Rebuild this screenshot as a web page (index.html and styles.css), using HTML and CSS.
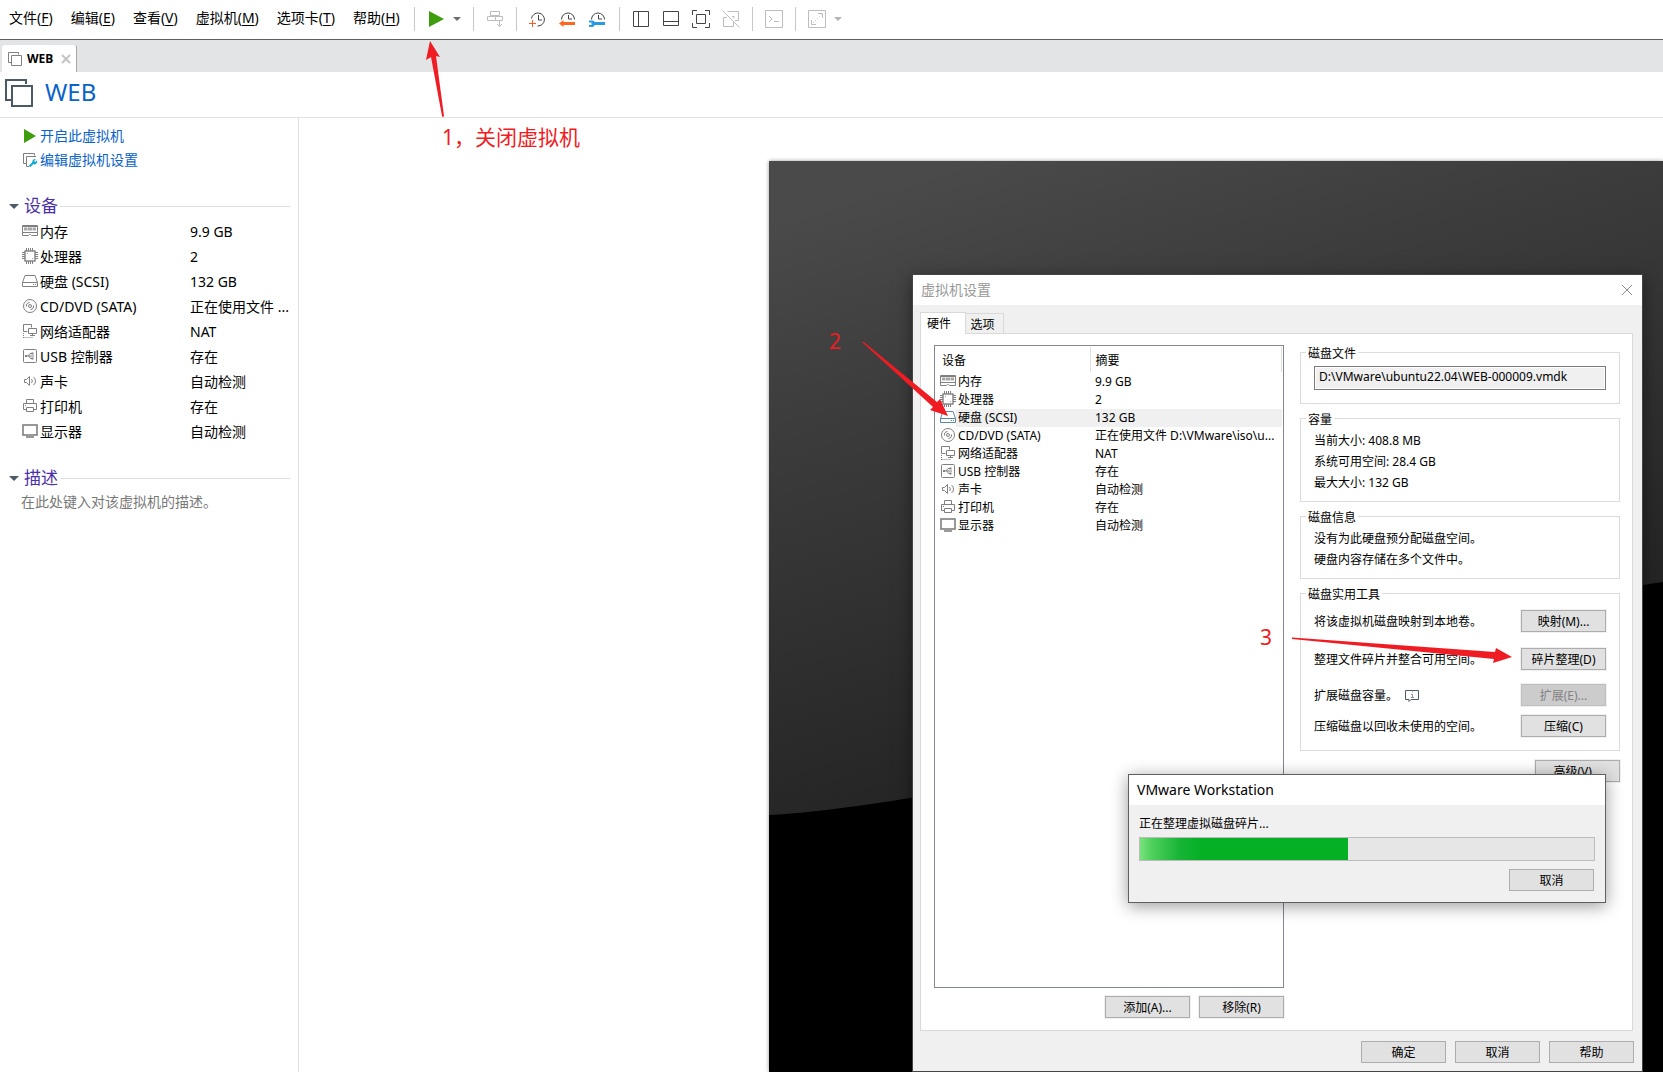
FILE: index.html
```html
<!DOCTYPE html>
<html lang="zh-CN">
<head>
<meta charset="utf-8">
<title>WEB - VMware Workstation</title>
<link rel="stylesheet" href="styles.css">
</head>
<body>
<svg class="symbols" aria-hidden="true">
  <symbol id="i-vm" viewBox="0 0 14 14"><path d="M3.500 10.500H.5V.5h10v2M3.500 3.500h10v10h-10z"/></symbol>
  <symbol id="i-memory" viewBox="0 0 16 16"><path d="M.5 2.500h15v10H9.500l-1-1h-1l-1 1H.5zM.5 9.500h15M1 3.500h14"/><path d="M2 4.500h3.500v3H2zM6 4.500h4v3H6zM10.500 4.500H14v3h-3.500z" fill="currentColor" stroke="none" opacity=".7"/></symbol>
  <symbol id="i-cpu" viewBox="0 0 16 16"><rect x="3" y="3" width="10" height="10" stroke-width="1.400"/><path d="M4.500 0v3M6.500 0v3M8.500 0v3M10.500 0v3M4.500 13v3M6.500 13v3M8.500 13v3M10.500 13v3M0 4.500h3M0 6.500h3M0 8.500h3M0 10.500h3M13 4.500h3M13 6.500h3M13 8.500h3M13 10.500h3M5.500 6V5.500H6M10 10.500h.5V10"/></symbol>
  <symbol id="i-disk" viewBox="0 0 16 16"><path d="M.5 9.500l2.500-7h10l2.500 7v4H.5zM.5 9.500h15M11 11.500h1M13 11.500h1"/></symbol>
  <symbol id="i-cd" viewBox="0 0 16 16"><circle cx="8" cy="8" r="6.500"/><circle cx="8" cy="8" r="1.500"/><path d="M4.500 8.500a3.500 3.500 0 0 1 3-4M11.500 7.500a3.500 3.500 0 0 1-3 4"/></symbol>
  <symbol id="i-net" viewBox="0 0 16 16"><path d="M5.500 8.500h-4v-7h8v3M6.500 5.500h8v5h-8zM10.500 10.500v2M8 12.500h5"/><path d="M1.500 10v5M1.500 14.500h9" stroke-dasharray="1 1"/></symbol>
  <symbol id="i-usb" viewBox="0 0 16 16"><rect x="1.500" y="1.500" width="13" height="13" rx="1"/><path d="M4 8h8M6 8l2-2.500h2M7 8l1.500 2.500H10"/><path d="M3 7h2v2H3zM9.500 4.500h2v2h-2zM9.500 9.500h2v2h-2z" fill="currentColor" stroke="none"/></symbol>
  <symbol id="i-sound" viewBox="0 0 16 16"><path d="M2.500 6.500h2l3-3v9l-3-3h-2zM9.500 6a3 3 0 0 1 0 4M11.500 4a5 5 0 0 1 0 8"/></symbol>
  <symbol id="i-print" viewBox="0 0 16 16"><path d="M4.500 5.500v-4h7v4M4.500 11.500h-3v-6h13v6h-3M4.500 9.500h7v4h-7zM3 7.500h1"/></symbol>
  <symbol id="i-display" viewBox="0 0 16 16"><rect x="1" y="2" width="14" height="10" stroke-width="1.600"/><path d="M4 14h8" stroke-width="1.600"/></symbol>
  <symbol id="i-wrench" viewBox="0 0 16 16"><path d="M4.500 11.500h-3v-10h11v2M7 14.500H4.500v-10H14"/><path d="M7.500 14.500l4-4" class="cyan"/><path d="M15 8.500l-2 1.500-.8-.8L13.700 7a3 3 0 0 0-3.200 4L12 12.500a3 3 0 0 0 3-4z" class="cyanfill"/></symbol>
</svg>

<header class="menubar">
  <nav class="menus" aria-label="主菜单">
    <button>文件(<u>F</u>)</button>
    <button>编辑(<u>E</u>)</button>
    <button>查看(<u>V</u>)</button>
    <button>虚拟机(<u>M</u>)</button>
    <button>选项卡(<u>T</u>)</button>
    <button>帮助(<u>H</u>)</button>
  </nav>
  <div class="tools">
    <div class="group power">
      <button aria-label="开启"><svg width="18" height="18"><path d="M1 1v16l15-8z" fill="#3f9c0f"/></svg></button>
      <button aria-label="电源选项"><svg width="10" height="18"><path d="M1 7h8L5 11z" fill="#6e6e6e"/></svg></button>
    </div>
    <div class="group send">
      <button disabled aria-label="发送"><svg width="18" height="18" class="line"><path d="M4.500 1.500h9v4h-9zM1.500 6.500h8v4h-8zM9.500 6.500h7v4h-7M13.500 11v5M11 14l2.500 2.500L16 14"/></svg></button>
    </div>
    <div class="group snaps">
      <button aria-label="拍摄快照"><svg width="18" height="18" class="line"><path d="M3.500 8.500a6.500 6.500 0 1 1 6 7.500M10.500 5v5H14"/><path d="M1 13.500h7M4.500 10v7" stroke="#ff5a1f"/></svg></button>
      <button aria-label="恢复快照"><svg width="18" height="18" class="line"><path d="M3.500 9.500a6.500 6.500 0 1 1 13 0M10.500 5v4H14"/><path d="M1 13.500L5.500 10v2H17v3H5.500v2z" fill="#ff661f" stroke="none"/></svg></button>
      <button aria-label="快照管理器"><svg width="18" height="18" class="line"><path d="M3.500 9.500a6.500 6.500 0 1 1 13 0M10.500 5v4H14"/><path d="M1 10.500h4L7 12h10v3H7l-2 2H1v-2h2.500v-2.500H1z" fill="#2a9be0" stroke="none"/></svg></button>
    </div>
    <div class="group views">
      <button aria-label="显示库"><svg width="18" height="18" class="line"><path d="M1.500 1.500h15v15h-15zM6.500 1.500v15"/></svg></button>
      <button aria-label="显示缩略图"><svg width="18" height="18" class="line"><path d="M1.500 1.500h15v14h-15zM1.500 11.500h15"/></svg></button>
      <button aria-label="全屏"><svg width="18" height="18" class="line"><path d="M.5 5V.5H5M13 .5h4.500V5M17.500 13v4.500H13M5 17.500H.5V13M4.500 4.500h9v9h-9z"/></svg></button>
      <button disabled aria-label="Unity"><svg width="18" height="18" class="line"><path d="M5.500 1.500h11v9H13M11.500 12v4.500h-10v-9H5M10 6.500h2v2M.5 .5l17 17"/></svg></button>
    </div>
    <div class="group console">
      <button disabled aria-label="控制台"><svg width="18" height="18" class="line"><path d="M.5 .5h17v17H.5zM4 6l3 3-3 3M9 11.500h5"/></svg></button>
    </div>
    <div class="group stretch">
      <button disabled aria-label="拉伸"><svg width="18" height="18" class="line"><path d="M.5 .5h17v17H.5zM10 3.500h4.500V8M3.500 10v4.500H8"/><path d="M5 13l9-9" stroke-dasharray="1 2"/></svg></button>
      <button disabled aria-label="拉伸选项"><svg width="10" height="18"><path d="M1 7h8L5 11z" fill="#b5b5b5"/></svg></button>
    </div>
  </div>
</header>

<div class="tabstrip">
  <div class="vmtab">
    <svg class="line gray" width="14" height="14"><use href="#i-vm"/></svg>
    <span>WEB</span>
    <button aria-label="关闭"><svg width="10" height="10"><path d="M1 1l8 8M9 1l-8 8" stroke="#c4c4c4" stroke-width="2"/></svg></button>
  </div>
</div>

<div class="vmtitle">
  <svg class="line slate" width="28" height="28"><use href="#i-vm"/></svg>
  <h1>WEB</h1>
</div>

<main class="content">
  <aside class="sidebar">
    <div class="actions">
      <a href="#"><svg width="16" height="16"><path d="M2 1v14l12-7z" fill="#3f9c0f"/></svg>开启此虚拟机</a>
      <a href="#"><svg class="line gray" width="16" height="16"><use href="#i-wrench"/></svg>编辑虚拟机设置</a>
    </div>
    <section>
      <h2>设备</h2>
      <table class="devices">
        <tr><th scope="row"><svg class="line gray" width="16" height="16"><use href="#i-memory"/></svg>内存</th><td>9.9 GB</td></tr>
        <tr><th scope="row"><svg class="line gray" width="16" height="16"><use href="#i-cpu"/></svg>处理器</th><td>2</td></tr>
        <tr><th scope="row"><svg class="line gray" width="16" height="16"><use href="#i-disk"/></svg>硬盘 (SCSI)</th><td>132 GB</td></tr>
        <tr><th scope="row"><svg class="line gray" width="16" height="16"><use href="#i-cd"/></svg>CD/DVD (SATA)</th><td>正在使用文件 ...</td></tr>
        <tr><th scope="row"><svg class="line gray" width="16" height="16"><use href="#i-net"/></svg>网络适配器</th><td>NAT</td></tr>
        <tr><th scope="row"><svg class="line gray" width="16" height="16"><use href="#i-usb"/></svg>USB 控制器</th><td>存在</td></tr>
        <tr><th scope="row"><svg class="line gray" width="16" height="16"><use href="#i-sound"/></svg>声卡</th><td>自动检测</td></tr>
        <tr><th scope="row"><svg class="line gray" width="16" height="16"><use href="#i-print"/></svg>打印机</th><td>存在</td></tr>
        <tr><th scope="row"><svg class="line gray" width="16" height="16"><use href="#i-display"/></svg>显示器</th><td>自动检测</td></tr>
      </table>
    </section>
    <section class="description">
      <h2>描述</h2>
      <p>在此处键入对该虚拟机的描述。</p>
    </section>
  </aside>

  <div class="stage">
    <div class="preview">
      <svg class="wallpaper" viewBox="0 0 894 911" preserveAspectRatio="none" aria-hidden="true">
        <defs><linearGradient id="wall" gradientUnits="userSpaceOnUse" x1="200" y1="0" x2="400" y2="650"><stop offset="0" stop-color="#4a4a4a"/><stop offset=".3" stop-color="#3c3c3c"/><stop offset="1" stop-color="#202020"/></linearGradient></defs>
        <rect width="894" height="911" fill="#000"/>
        <path d="M0 0H894V421C780 436 600 520 480 560S100 650 0 654z" fill="url(#wall)"/>
      </svg>

      <section class="settings" role="dialog" aria-labelledby="settings-title">
        <header class="titlebar">
          <h2 id="settings-title">虚拟机设置</h2>
          <button aria-label="关闭"><svg width="12" height="12"><path d="M1 1l10 10M11 1L1 11" stroke="#8c8c8c"/></svg></button>
        </header>
        <div class="tabs" role="tablist">
          <button role="tab" aria-selected="true">硬件</button>
          <button role="tab" aria-selected="false">选项</button>
        </div>
        <div class="pane">
          <div class="hardware">
            <div class="listbox">
              <table>
                <thead><tr><th>设备</th><th>摘要</th></tr></thead>
                <tbody>
                  <tr><td><svg class="line gray" width="16" height="16"><use href="#i-memory"/></svg>内存</td><td>9.9 GB</td></tr>
                  <tr><td><svg class="line gray" width="16" height="16"><use href="#i-cpu"/></svg>处理器</td><td>2</td></tr>
                  <tr class="selected"><td><svg class="line blue" width="16" height="16"><use href="#i-disk"/></svg>硬盘 (SCSI)</td><td>132 GB</td></tr>
                  <tr><td><svg class="line gray" width="16" height="16"><use href="#i-cd"/></svg>CD/DVD (SATA)</td><td>正在使用文件 D:\VMware\iso\u...</td></tr>
                  <tr><td><svg class="line gray" width="16" height="16"><use href="#i-net"/></svg>网络适配器</td><td>NAT</td></tr>
                  <tr><td><svg class="line gray" width="16" height="16"><use href="#i-usb"/></svg>USB 控制器</td><td>存在</td></tr>
                  <tr><td><svg class="line gray" width="16" height="16"><use href="#i-sound"/></svg>声卡</td><td>自动检测</td></tr>
                  <tr><td><svg class="line gray" width="16" height="16"><use href="#i-print"/></svg>打印机</td><td>存在</td></tr>
                  <tr><td><svg class="line gray" width="16" height="16"><use href="#i-display"/></svg>显示器</td><td>自动检测</td></tr>
                </tbody>
              </table>
            </div>
            <div class="buttons">
              <button class="btn">添加(A)...</button>
              <button class="btn">移除(R)</button>
            </div>
          </div>
          <div class="details">
            <fieldset class="file">
              <legend id="disk-file">磁盘文件</legend>
              <div><input type="text" readonly aria-labelledby="disk-file" value="D:\VMware\ubuntu22.04\WEB-000009.vmdk"></div>
            </fieldset>
            <fieldset>
              <legend>容量</legend>
              <div class="lines">
                <p>当前大小: 408.8 MB</p>
                <p>系统可用空间: 28.4 GB</p>
                <p>最大大小: 132 GB</p>
              </div>
            </fieldset>
            <fieldset>
              <legend>磁盘信息</legend>
              <div class="lines">
                <p>没有为此硬盘预分配磁盘空间。</p>
                <p>硬盘内容存储在多个文件中。</p>
              </div>
            </fieldset>
            <fieldset>
              <legend>磁盘实用工具</legend>
              <div class="utilities">
                <p>将该虚拟机磁盘映射到本地卷。</p><button class="btn">映射(M)...</button>
                <p>整理文件碎片并整合可用空间。</p><button class="btn">碎片整理(D)</button>
                <p>扩展磁盘容量。<svg class="line slate" width="16" height="14"><path d="M1.500 1.500h13v9H7l-2 2v-2H1.500z"/><path d="M8 3h1M7 5.500h1.500V9M7 8.500h3" stroke="#8a949c"/></svg></p><button class="btn" disabled>扩展(E)...</button>
                <p>压缩磁盘以回收未使用的空间。</p><button class="btn">压缩(C)</button>
              </div>
            </fieldset>
            <button class="btn advanced">高级(V)...</button>
          </div>
        </div>
        <footer class="buttons">
          <button class="btn">确定</button>
          <button class="btn">取消</button>
          <button class="btn">帮助</button>
        </footer>
      </section>

      <section class="progress" role="dialog" aria-labelledby="progress-title">
        <h2 id="progress-title">VMware Workstation</h2>
        <div class="progress-body">
          <label for="defrag">正在整理虚拟磁盘碎片...</label>
          <progress id="defrag" max="1000" value="458"></progress>
          <button class="btn">取消</button>
        </div>
      </section>
    </div>
  </div>
</main>

<div class="notes">
  <svg aria-hidden="true"><path d="M430 41L440 57L436 56L444 116Q443 118 442 116L431 57L426 60zM862 342Q863 341 865 343L937 402L940 399L948 416L930 410L933 407zM1292 637.500L1495 652L1496 648L1512 657L1493 663L1494 659L1292 639z" fill="#f01c24"/></svg>
  <span class="note one">1，关闭虚拟机</span>
  <span class="note two">2</span>
  <span class="note three">3</span>
</div>
</body>
</html>
```
FILE: styles.css
```css
* { box-sizing: border-box; }

body {
  margin: 0;
  min-height: 100vh;
  display: flex;
  flex-direction: column;
  position: relative;
  overflow-x: hidden;
  background: #fff;
  color: #000;
  font: 14px/20px "Noto Sans", "Noto Sans CJK SC", sans-serif;
}

h1, h2, p { margin: 0; font-weight: 400; }
button { font: inherit; color: inherit; margin: 0; padding: 0; border: 0; background: none; }
svg { display: block; flex: none; }
u { text-underline-offset: 2px; }

.symbols { position: absolute; width: 0; height: 0; }
.line { fill: none; stroke: currentColor; color: #444; }
.line.gray { color: #808080; }
.line.slate { color: #4a5a66; }
.line.blue { color: #5b86ac; }
.cyan { stroke: #16a9cf; stroke-width: 2; }
.cyanfill { fill: #16a9cf; stroke: none; }

/* menu and toolbar */
.menubar {
  display: flex;
  align-items: center;
  height: 40px;
  padding: 0 0 3px 9px;
  border-bottom: 1px solid #5f615f;
}
.menus { display: flex; gap: 18px; width: 405px; white-space: nowrap; }
.tools { display: flex; height: 24px; margin-top: 2px; }
.group { display: flex; align-items: center; border-left: 1px solid #c8c8c8; }
.group button:disabled .line { color: #bdbdbd; }
.power { width: 59px; padding-left: 13px; gap: 6px; }
.send { width: 43px; padding-left: 12px; }
.snaps { width: 103px; padding-left: 11px; gap: 12px; }
.views { width: 133px; padding-left: 12px; gap: 12px; }
.console { width: 43px; padding-left: 12px; }
.stretch { padding-left: 12px; gap: 7px; }

.tabstrip { display: flex; height: 32px; padding: 5px 2px 0; background: #e3e4e5; }
.vmtab {
  display: flex;
  align-items: center;
  width: 75px;
  padding: 0 5px 0 6px;
  background: #fff;
  border-right: 1px solid #a8a8a8;
  border-radius: 3px 3px 0 0;
  font-size: 12px;
  font-weight: 700;
}
.vmtab span { flex: 1; padding-left: 5px; }

.vmtitle {
  display: flex;
  align-items: center;
  gap: 12px;
  height: 46px;
  padding: 0 5px 4px;
  border-bottom: 1px solid #e0e0e0;
  color: #0a63c8;
}
.vmtitle h1 { font-size: 24px; line-height: 32px; margin-bottom: 2px; }

/* left summary */
.content { flex: 1; display: flex; }
.sidebar { width: 299px; flex: none; padding: 8px 8px 0 9px; border-right: 1px solid #e0e0e0; }
.actions { display: grid; gap: 4px; padding-left: 13px; }
.actions a { display: flex; align-items: center; gap: 2px; color: #0a63c8; text-decoration: none; }
.sidebar section { padding-top: 24px; }
.sidebar .description { padding-top: 22px; }
.sidebar h2 {
  display: flex;
  align-items: center;
  color: #4a2fa8;
  font-size: 17px;
  line-height: 24px;
}
.sidebar h2::before {
  content: "";
  border: 5px solid transparent;
  border-top-color: #4a5a66;
  border-bottom: 0;
  margin-right: 5px;
}
.sidebar h2::after { content: ""; flex: 1; height: 1px; margin-left: 2px; background: #e0e0e0; }
.sidebar p { padding: 2px 0 0 12px; color: #777; }
.devices { width: 100%; margin-top: 1px; border-collapse: collapse; table-layout: fixed; white-space: nowrap; }
.devices tr { height: 25px; }
.devices th { width: 181px; padding: 0 0 0 13px; text-align: left; font-weight: 400; }
.devices td { padding: 0; }
td svg, th svg { display: inline-block; vertical-align: middle; margin: -4px 2px 0 0; }

/* desktop with the two dialogs */
.stage { flex: 1; display: flex; padding: 43px 0 0 470px; min-width: 0; }
.preview { flex: 1; position: relative; overflow: hidden; min-height: 911px; box-shadow: 0 0 4px #999; }
.wallpaper { position: absolute; inset: 0; width: 100%; height: 100%; }

.settings {
  position: absolute;
  inset: 114px auto 1px 144px;
  width: 729px;
  display: flex;
  flex-direction: column;
  background: #f0f0f0;
  box-shadow: 0 0 0 1px #444, 0 4px 16px rgba(0, 0, 0, .5);
  font-size: 12px;
  line-height: 18px;
}
.titlebar { display: flex; justify-content: space-between; align-items: center; height: 30px; padding: 0 9px 0 8px; background: #fff; }
.titlebar h2 { color: #999; font-size: 14px; line-height: 20px; }

.tabs { display: flex; align-items: flex-end; padding: 7px 7px 0; }
.tabs button { width: 38px; height: 20px; padding: 2px 4px 0 0; border: 1px solid #d9d9d9; border-width: 1px 1px 0 0; }
.tabs [aria-selected="true"] {
  position: relative;
  z-index: 1;
  width: 46px;
  height: 22px;
  margin-bottom: -1px;
  padding: 0 8px 0 0;
  border-width: 1px 1px 0 1px;
  background: #fff;
}
.pane {
  flex: 1;
  display: flex;
  gap: 16px;
  margin: 0 9px 0 7px;
  padding: 11px 12px 12px 13px;
  border: 1px solid #d9d9d9;
  background: #fff;
}
.hardware { width: 350px; flex: none; display: flex; flex-direction: column; gap: 8px; }
.listbox { flex: 1; padding: 1px; border: 1px solid #828790; }
.listbox table { width: 100%; border-collapse: collapse; table-layout: fixed; white-space: nowrap; }
.listbox th { height: 25px; padding: 3px 5px 0; text-align: left; font-weight: 400; border-right: 1px solid #e0e0e0; }
.listbox th:first-child { width: 154px; padding-left: 6px; }
.listbox tbody::before { content: ""; display: block; height: 1px; }
.listbox td { height: 18px; padding: 0 0 0 5px; line-height: 16px; }
.listbox td:first-child { padding-left: 4px; }
.selected td { background: #f0f0f0; }
.selected td:first-child { background: linear-gradient(90deg, #fff 20px, #f0f0f0 20px); }

.buttons { display: flex; justify-content: flex-end; gap: 9px; }
footer.buttons { padding: 10px 8px 8px; }
.btn {
  width: 85px;
  height: 22px;
  padding-top: 2px;
  border: 1px solid #adadad;
  background: #e1e1e1;
  box-shadow: 0 0 0 1px #f0f0f0;
  font-size: 12px;
  line-height: 18px;
}
.btn:disabled { background: #ccc; border-color: #bfbfbf; color: #838383; }

.details { flex: 1; display: flex; flex-direction: column; gap: 7px; }
fieldset { margin: 0; padding: 0 5px; border: 1px solid #dcdcdc; min-width: 0; }
legend { height: 14px; padding: 0 2px; line-height: 17px; }
fieldset > div { padding: 5px 8px 8px; }
.file > div { padding: 7px 8px 13px; }
.file input {
  display: block;
  width: 100%;
  height: 24px;
  padding: 0 4px 3px;
  border: 1px solid #7a7a7a;
  border-radius: 0;
  background: #f0f0f0;
  box-shadow: inset 0 0 0 1px #fff;
  font: inherit;
}
.lines p { line-height: 21px; }
fieldset .utilities {
  display: grid;
  grid-template-columns: 1fr 85px;
  grid-template-rows: 38px 36px 31px 22px;
  align-items: start;
  padding: 10px 8px 13px;
}
.utilities p { display: flex; align-items: center; gap: 6px; line-height: 24px; }
.advanced { align-self: flex-end; margin: 2px 0 0; }

.progress {
  position: absolute;
  left: 359px;
  top: 613px;
  width: 478px;
  border: 1px solid #5f5f5f;
  background: #f0f0f0;
  box-shadow: 0 3px 16px rgba(0, 0, 0, .4);
}
.progress h2 { height: 30px; padding: 0 8px; background: #fff; font-size: 14px; line-height: 30px; }
.progress-body { display: flex; flex-direction: column; padding: 9px 10px 11px; font-size: 12px; }
.progress-body .btn { align-self: flex-end; box-shadow: none; margin-right: 1px; }
progress {
  appearance: none;
  width: 100%;
  height: 24px;
  margin: 3px 0 8px;
  border: 1px solid #bcbcbc;
  background: #e6e6e6;
}
progress::-webkit-progress-bar { background: #e6e6e6; }
progress::-webkit-progress-value { background: linear-gradient(90deg, #78e27c, #4fd05c 12px, #17b436 40px, #06b025 60px); }

/* red callouts over the window */
.notes { position: absolute; inset: 0; overflow: hidden; pointer-events: none; }
.notes svg { width: 100%; height: 100%; }
.note { position: absolute; color: #f01c24; font-size: 21px; line-height: 28px; white-space: nowrap; }
.one { left: 442px; top: 123px; }
.two { left: 829px; top: 327px; }
.three { left: 1260px; top: 623px; }
```
